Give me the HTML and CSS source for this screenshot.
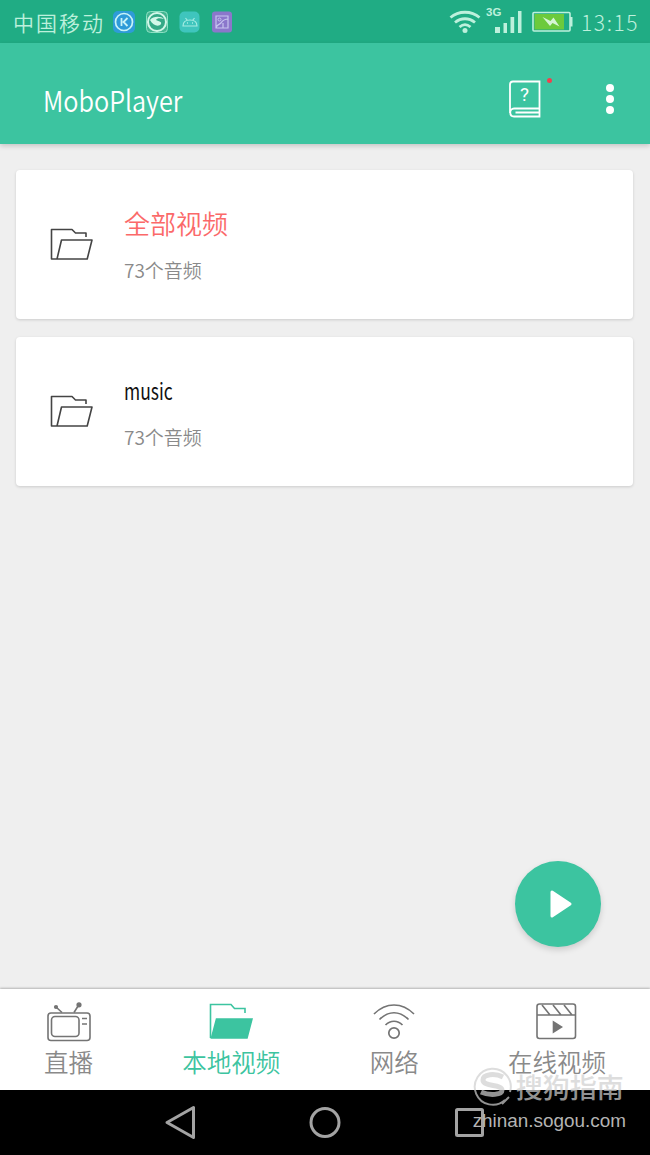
FILE: index.html
```html
<!DOCTYPE html>
<html lang="zh-CN">
  <head>
    <meta charset="UTF-8" />
    <meta name="viewport" content="width=device-width, initial-scale=1.0" />
    <title>MoboPlayer</title>
    <link rel="stylesheet" href="styles.css">
  </head>
  <body>
    <div class="statusbar">
      <span class="carrier">中国移动</span>
      <div class="notices">
        <svg width="22" height="22" viewBox="0 0 22 22" fill="none">
          <rect width="22" height="22" rx="5" fill="#2e9bd8" />
          <circle cx="11" cy="11" r="8.5" stroke="#c9f3f7" stroke-width="1.7" />
          <path d="M8.500 7v8M14.500 7l-4 4 4 4" stroke="#c9f3f7" stroke-width="1.800" />
        </svg>
        <svg width="22" height="22" viewBox="0 0 22 22" fill="none">
          <rect x=".5" y=".5" width="21" height="21" rx="4" stroke="#8ee0c4" fill="#43b591" />
          <circle cx="11" cy="11" r="9" fill="#35a987" stroke="#d3f7e9" stroke-width="2" />
          <path d="M4 9c3-4 11-4 14-1-4-1-7-1-8 1 3 2 6 1 5 4-2 3-8 2-11-4z" fill="#d3f7e9" />
        </svg>
        <svg width="22" height="22" viewBox="0 0 22 22" fill="none">
          <rect x=".5" y=".5" width="20" height="21" rx="5" fill="#3fc5bd" />
          <path d="M4 15c0-4 3-6 7-6s7 2 7 6zM6.500 7l2 2.500M15.500 7l-2 2.500" stroke="#a5ece2" stroke-width="1.200" />
          <path d="M8 12h1M13 12h1" stroke="#a5ece2" stroke-width="1.500" />
        </svg>
        <svg width="22" height="22" viewBox="0 0 22 22" fill="none">
          <rect x="0" y=".5" width="20" height="21" rx="3" fill="#8b77cb" />
          <path d="M4 5h12v12H4zM4 17c1-4 3-3 5-5 1.500-2 2.500-4 7-4M11 12v5" stroke="#c7c5ef" stroke-width="1.200" />
          <circle cx="7.500" cy="8.500" r="1.500" stroke="#c7c5ef" />
        </svg>
      </div>
      <div class="signals">
        <svg class="wifi" width="32" height="24" viewBox="0 0 32 24" fill="none" stroke="#bdf0dc" stroke-width="2.800">
          <path d="M1.500 7.500c8-7 21-7 29 0M6 12.500c6-5 14-5 20 0M10.500 17c3.500-3 7.500-3 11 0" />
          <circle cx="16" cy="20.500" r="2.500" fill="#bdf0dc" stroke="none" />
        </svg>
        <div class="mobile">
          <svg width="27" height="24" viewBox="0 0 27 24" fill="#bdf0dc">
            <path d="M0 17h5v6H0zM8.500 13h3.500v10H8.500zM15.500 7h3.700v16h-3.700zM23 1h3.500v22H23z" />
          </svg>
          <span class="network">3G</span>
        </div>
        <svg class="battery" width="42" height="22" viewBox="0 0 42 22">
          <path d="M38 6h2.500v9.500H38z" fill="#bdf0dc" />
          <rect x="1" y="1.500" width="37" height="18.500" rx="1" fill="#20ac84" stroke="#bdf0dc" stroke-width="1.600" />
          <path d="M2.500 3h29.500v15.500H2.500z" fill="#6cca3c" />
          <path d="M10.500 6l8 4 3-3.500 6 9-7-3.500-2.500 3z" fill="#d6f6d6" />
        </svg>
      </div>
      <span class="clock">13:15</span>
    </div>

    <header class="appbar">
      <h1>MoboPlayer</h1>
      <div class="help">
        <svg width="32" height="38" viewBox="0 0 32 38" fill="none" stroke="#fff" stroke-width="1.800">
          <path d="M30.500 28.500H5c-5 0-5 8 0 8h25.500V1.500H4c-2 0-3 1-3 3V33M6.500 32.500h24" />
        </svg>
        <span class="mark">?</span>
        <span class="dot"></span>
      </div>
      <div class="more"><i></i><i></i><i></i></div>
    </header>

    <main>
      <div class="card">
        <svg class="folder" width="43" height="32" viewBox="0 0 43 32" fill="none" stroke="#444" stroke-width="1.600" stroke-linejoin="round">
          <path d="M7 31H1.500V1.500H22l3.500 3.500H36v4M7 31L11.500 12H42l-4.800 19z" />
        </svg>
        <div>
          <div class="name all">全部视频</div>
          <div class="count">73个音频</div>
        </div>
      </div>
      <div class="card">
        <svg class="folder" width="43" height="32" viewBox="0 0 43 32" fill="none" stroke="#444" stroke-width="1.600" stroke-linejoin="round">
          <path d="M7 31H1.500V1.500H22l3.500 3.500H36v4M7 31L11.500 12H42l-4.800 19z" />
        </svg>
        <div>
          <div class="name music">music</div>
          <div class="count">73个音频</div>
        </div>
      </div>
      <button class="play">
        <svg width="22" height="30" viewBox="0 0 22 30" fill="#fff" stroke="#fff" stroke-width="3" stroke-linejoin="round">
          <path d="M2 3v24l18-12z" />
        </svg>
      </button>
    </main>

    <nav class="tabs">
      <a class="tab">
        <svg width="44" height="40" viewBox="0 0 44 40" fill="none" stroke="#747474" stroke-width="1.600">
          <rect x="1" y="11" width="42" height="27.500" rx="3" />
          <rect x="4.500" y="14.500" width="27.500" height="20" rx="3.500" />
          <path d="M35 16.500h5M35 22h5M15 10.500L9 5M27 10.500l5-8" />
          <circle cx="9" cy="5" r="1.300" fill="#747474" />
          <circle cx="32" cy="2.800" r="1.800" fill="#747474" />
        </svg>
        <span>直播</span>
      </a>
      <a class="tab active">
        <svg width="44" height="40" viewBox="0 0 44 40" fill="none" stroke="#3cc4a0" stroke-width="1.600">
          <path d="M1.500 36V2.500H22l3.500 4H36v4.500" />
          <path d="M7.500 17H43L38 36H2.500z" fill="#3cc4a0" />
        </svg>
        <span>本地视频</span>
      </a>
      <a class="tab">
        <svg width="44" height="40" viewBox="0 0 44 40" fill="none" stroke="#747474" stroke-width="1.700">
          <path d="M2 12c12-12 28-12 40 0M7.500 17.500c9-9 20-9 29 0M13.500 23c5-5 12-5 17 0" />
          <circle cx="22" cy="31" r="5.200" />
        </svg>
        <span>网络</span>
      </a>
      <a class="tab">
        <svg width="44" height="40" viewBox="0 0 44 40" fill="none" stroke="#747474" stroke-width="1.600">
          <rect x="2" y="2" width="38.500" height="34.500" rx="2.500" />
          <path d="M2 13h38.500M7 3l8 10M18 3l8 10M29 3l8 10" />
          <path d="M18.500 20v10l8-5z" fill="#747474" />
        </svg>
        <span>在线视频</span>
      </a>
    </nav>

    <div class="navbar">
      <svg width="32" height="34" viewBox="0 0 32 34" fill="none" stroke="#a3a3a3" stroke-width="3" stroke-linejoin="round">
        <path d="M29.500 2.500v30L3 17.500z" />
      </svg>
      <svg width="32" height="34" viewBox="0 0 32 34" fill="none" stroke="#a3a3a3" stroke-width="3">
        <circle cx="16" cy="17.500" r="14" />
      </svg>
      <svg width="32" height="34" viewBox="0 0 32 34" fill="none" stroke="#a3a3a3" stroke-width="3">
        <rect x="2.500" y="4.500" width="26" height="26" rx="1" />
      </svg>
    </div>

    <div class="watermark">
      <div class="brand">
        <svg width="40" height="40" viewBox="0 0 40 40" fill="none" stroke="#d0d0d0">
          <path d="M32 34A18 18 0 1 1 37 26M29 38l7-7" stroke-width="2" />
          <path d="M30 11c-8-4-20-3-20 3 0 7 19 4 19 10 0 5-12 6-21 2" stroke-width="5" />
        </svg>
        <span>搜狗指南</span>
      </div>
      <div class="site">zhinan.sogou.com</div>
    </div>
  </body>
</html>
```

FILE: styles.css
```css
* {
  box-sizing: border-box;
}
body {
  position: relative;
  display: flex;
  flex-direction: column;
  width: 650px;
  height: 1155px;
  margin: 0;
  overflow: hidden;
  background-color: #efefef;
  font-family: "Noto Sans CJK SC", sans-serif;
  font-weight: 350;
  white-space: nowrap;
}
svg {
  display: block;
  flex: none;
}
.statusbar {
  display: flex;
  align-items: center;
  height: 43px;
  padding: 0 11px 0 13px;
  background-color: #20ac84;
  color: #bdf0dc;
}
.carrier {
  width: 100px;
  font-size: 21px;
  letter-spacing: 2px;
}
.notices {
  display: flex;
  gap: 11px;
}
.signals {
  display: flex;
  align-items: center;
  margin-left: auto;
}
.mobile {
  position: relative;
  margin: 0 10px 0 14px;
}
.network {
  position: absolute;
  left: -9px;
  top: -4px;
  font: bold 11.5px/12px "Liberation Sans", sans-serif;
}
.clock {
  width: 58px;
  margin-left: 7px;
  font-size: 21px;
  font-weight: 300;
  letter-spacing: 1.6px;
}
.appbar {
  position: relative;
  display: flex;
  align-items: center;
  height: 101px;
  padding: 10px 36px 0 43px;
  background-color: #3cc4a0;
  color: #fff;
  box-shadow: 0 2px 5px rgba(0, 0, 0, 0.18);
}
h1 {
  flex: 1;
  margin: 0;
  font-size: 29px;
  font-weight: 350;
  line-height: 40px;
  transform: scaleX(0.87);
  transform-origin: left;
}
.help {
  position: relative;
  margin-right: 65px;
}
.mark {
  position: absolute;
  left: 0;
  top: 4px;
  width: 31px;
  text-align: center;
  font: 400 19px/22px Roboto, sans-serif;
}
.dot {
  position: absolute;
  left: 38px;
  top: -2px;
  width: 5px;
  height: 5px;
  border-radius: 50%;
  background-color: #f0414f;
}
.more {
  display: flex;
  flex-direction: column;
  gap: 3px;
}
.more i {
  width: 8px;
  height: 8px;
  border-radius: 50%;
  background-color: #fff;
}
main {
  display: flex;
  flex: 1;
  flex-direction: column;
  gap: 18px;
  padding: 26px 17px 0 16px;
}
.card {
  display: flex;
  align-items: center;
  height: 149px;
  padding-left: 34px;
  border-radius: 4px;
  background-color: #fff;
  box-shadow: 0 1px 3px rgba(0, 0, 0, 0.15);
}
.folder {
  margin: 0 31px 1px 0;
}
.name {
  height: 40px;
  font-size: 26px;
  line-height: 40px;
}
.all {
  color: #fb6969;
}
.music {
  color: #111;
  font-size: 23px;
  font-weight: 400;
  transform: scaleX(0.76);
  transform-origin: left;
}
.count {
  margin: 14px 0 3px;
  color: #8a8a8a;
  font-size: 19px;
  line-height: 26px;
}
.play {
  display: flex;
  align-items: center;
  align-self: flex-end;
  justify-content: center;
  width: 86px;
  height: 86px;
  margin: auto 32px 42px 0;
  padding: 0 0 0 6px;
  border: none;
  border-radius: 50%;
  background-color: #3cc4a0;
  box-shadow: 0 3px 6px rgba(0, 0, 0, 0.15);
}
.tabs {
  display: flex;
  justify-content: space-between;
  height: 101px;
  padding: 13px 44px 0;
  background-color: #fff;
  box-shadow: 0 -1px 2px rgba(0, 0, 0, 0.25);
}
.tab {
  display: flex;
  flex-direction: column;
  align-items: center;
  color: #8a8a8a;
  font-size: 24.5px;
  line-height: 40px;
}
.active {
  color: #3cc4a0;
}
.navbar {
  display: flex;
  justify-content: center;
  gap: 113px;
  height: 65px;
  padding-top: 15px;
  background-color: #000;
}
/* lies over the tabs and the navigation bar */
.watermark {
  position: absolute;
  right: 24px;
  top: 1066px;
  text-align: right;
  color: #d0d0d0;
}
.brand {
  display: flex;
  gap: 3px;
  align-items: center;
  height: 40px;
  font-size: 27px;
  font-weight: 500;
  opacity: 0.7;
}
.site {
  color: #b4b4b4;
  font: 18.9px/30px "Liberation Sans", sans-serif;
}
```
